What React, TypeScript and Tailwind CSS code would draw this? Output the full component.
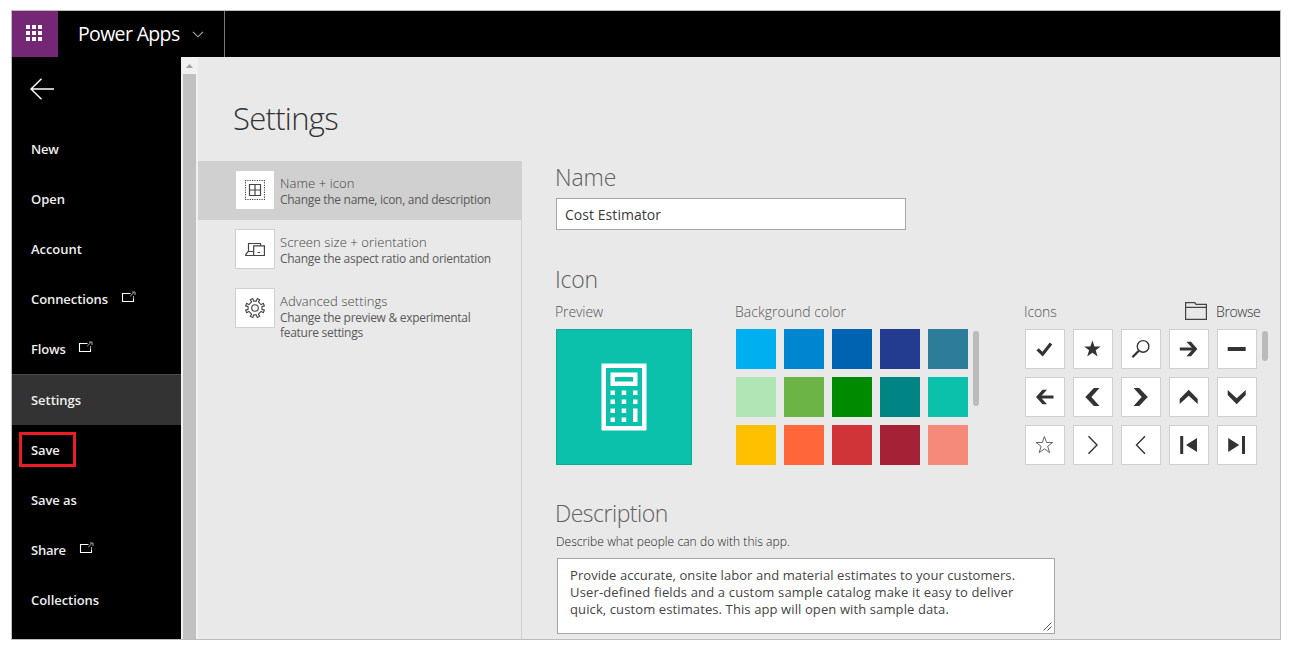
import React from "react";

const ExternalIcon = ({ className }: { className: string }) => (
  <svg width="15" height="12" viewBox="0 0 15 12" fill="none" stroke="#fff" className={className}>
    <path d="M9.5 2.5h-8v8h11V7.5" strokeWidth="1.1" />
    <path d="M12.5 8V5M9.2 5.2l3.6-3.6M11 1h3v3" stroke="#aaa" />
  </svg>
);

const menu = [
  { label: "New", cls: "tracking-[-0.2px]" },
  { label: "Open", cls: "tracking-[-0.05px]" },
  { label: "Account", cls: "tracking-[-0.05px]" },
  { label: "Connections", cls: "tracking-[-0.08px]", ext: "ml-[13px]" },
  { label: "Flows", cls: "tracking-[-0.15px]", ext: "ml-[12px]" },
  { label: "Settings", cls: "tracking-[-0.05px]", active: true },
  { label: "Save", cls: "tracking-[-0.1px]", boxed: true },
  { label: "Save as", cls: "tracking-[-0.1px]" },
  { label: "Share", cls: "tracking-[-0.25px]", ext: "ml-[13px]" },
  { label: "Collections", cls: "tracking-[-0.05px]" },
];

const sections = [
  {
    title: "Name + icon",
    text: ["Change the name, icon, and description"],
    active: true,
    icon: (
      <g fill="none" stroke="#444">
        <path d="M0 .5H20M0 19.5H20M.5 0V20M19.5 0V20" strokeDasharray="1.2 1.15" strokeWidth="1.1" />
        <path d="M4.5 4.5h11v11h-11zM10 4.5v11M4.5 10h11" strokeWidth="1.2" />
      </g>
    ),
  },
  {
    title: "Screen size + orientation",
    text: ["Change the aspect ratio and orientation"],
    icon: (
      <g fill="none" stroke="#444" strokeWidth="1.2">
        <path d="M3.5 12V4.5h12v2.3M3.5 12.2.7 15.5v1h8M3.5 12.5h5" />
        <path d="M8.7 6.9h10.7v9.6H8.7zM12.5 13.5h2.5" />
      </g>
    ),
  },
  {
    title: "Advanced settings",
    text: ["Change the preview & experimental", "feature settings"],
    icon: (
      <g fill="none" stroke="#444" strokeWidth="1.1" strokeLinejoin="round">
        <circle cx="10" cy="10" r="3.3" />
        <path d="M8.6 3.1 7.9.6 5.3 1.7 6.6 3.9 3.9 6.6 1.7 5.3.6 7.9 3.1 8.6V11.4L.6 12.1 1.7 14.7 3.9 13.4 6.6 16.1 5.3 18.3 7.9 19.4 8.6 16.9H11.4L12.1 19.4 14.7 18.3 13.4 16.1 16.1 13.4 18.3 14.7 19.4 12.1 16.9 11.4V8.6L19.4 7.9 18.3 5.3 16.1 6.6 13.4 3.9 14.7 1.7 12.1.6 11.4 3.1z" />
      </g>
    ),
  },
];

const colors = [
  "bg-[#00aff0]", "bg-[#0085d0]", "bg-[#0063b1]", "bg-[#243c8f]", "bg-[#2d7d9a]",
  "bg-[#b0e5b5]", "bg-[#6bb445]", "bg-[#008a00]", "bg-[#008484]", "bg-[#0cc1ab]",
  "bg-[#ffc000]", "bg-[#ff673a]", "bg-[#d13438]", "bg-[#a52136]", "bg-[#f58a7a]",
];

const star = "M8.4.5 10.5 6.5H16.7L11.7 10.3 13.6 16.6 8.4 12.8 3.2 16.6 5.1 10.3.1 6.5H6.3z";

const glyphs = [
  <path d="M1.6 9.4 6.6 14.2 15 3.4" fill="none" stroke="#333" strokeWidth="3.2" />,
  <path d={star} fill="#333" />,
  <g fill="none" stroke="#333">
    <circle cx="11.1" cy="6.4" r="5.8" strokeWidth="1.4" />
    <path d="M6.8 10.8.4 17.2" strokeWidth="2.3" />
  </g>,
  <g>
    <path d="M-.2 9h15" stroke="#333" strokeWidth="3" />
    <path d="M6.5 1.7H11L17.4 9 11 16.3H6.5L13 9z" fill="#333" />
  </g>,
  <path d="M-.3 9h18" stroke="#333" strokeWidth="4" />,
  <g>
    <path d="M2.5 9h15" stroke="#333" strokeWidth="3" />
    <path d="M11 1.7H6.5L0 9l6.5 7.3H11L4.4 9z" fill="#333" />
  </g>,
  <path d="M9.9 0h5.6L7.4 9l8.1 9H9.9L1.3 9z" fill="#333" />,
  <path d="M7.2 0H1.6l8.1 9-8.1 9h5.6l8.6-9z" fill="#333" />,
  <path d="M-.3 11v5L8.7 7.8l9 8.2v-5l-9-9.2z" fill="#333" />,
  <path d="M-.3 7V2l9 8.2 9-8.2v5l-9 9.2z" fill="#333" />,
  <path d={star} fill="none" stroke="#555" strokeWidth=".9" />,
  <path d="m4.5.3 8.5 8.7-8.5 8.7" fill="none" stroke="#333" strokeWidth="1.4" />,
  <path d="M13 .3 4.5 9l8.5 8.7" fill="none" stroke="#333" strokeWidth="1.4" />,
  <path d="M.2 0h3v18h-3zM17 2v14L6 9z" fill="#333" />,
  <path d="M14 0h3v18h-3zM.2 2v14l11-7z" fill="#333" />,
];

const light = "font-['Open_Sans','Noto_Sans',sans-serif] font-light";

export default function App() {
  return (
    <div className="h-[652px] w-[1293px] bg-white pt-[10px] pl-[11px] font-['Open_Sans','Noto_Sans',sans-serif] whitespace-nowrap">
      <div className="flex h-[630px] w-[1270px] flex-col overflow-hidden border border-[#bdbdbd] bg-[#e9e9e9]">
        <header className="flex h-[46px] shrink-0 bg-black text-white">
          <div className="flex w-[46px] items-center justify-center bg-[#742774]">
            <svg width="16" height="16" viewBox="0 0 16 16" fill="#fff" className="mr-[2px] mb-[2px]">
              {[0, 6, 12].map((y) => [0, 6, 12].map((x) => <rect key={`${x}-${y}`} x={x} y={y} width="4" height="4" />))}
            </svg>
          </div>
          <div className="flex w-[167px] items-center border-r border-[#777] pl-5">
            <span className="w-[102px] text-[19.5px] leading-[46px] tracking-[-0.65px]">Power Apps</span>
            <svg width="12" height="7" viewBox="0 0 12 7" fill="none" stroke="#aaa" strokeWidth="1.1" className="ml-[12px] mt-px">
              <path d="m1 .8 5 5 5-5" />
            </svg>
          </div>
        </header>

        <div className="flex min-h-0 flex-1">
          <nav className="w-[169px] shrink-0 bg-black text-[13px] font-semibold text-[#eee]">
            <div className="h-[67px] pt-[21px] pl-[18px]">
              <svg width="25" height="22" viewBox="0 0 25 22" fill="none" stroke="#fff" strokeWidth="1.5">
                <path d="M11.5.7 1 11l10.5 10.3M1 11h23" />
              </svg>
            </div>
            {menu.map((m) => (
              <div
                key={m.label}
                className={
                  m.active
                    ? "flex h-[51px] items-center border-t border-[#4a4a4a] bg-[#333] pl-[19px]"
                    : m.boxed
                      ? "flex h-[50px] items-center pb-px pl-[7px]"
                      : "flex h-[50px] items-center pl-[19px]"
                }
              >
                {m.boxed ? (
                  <div className="flex h-[35px] w-[57px] items-center border-[3px] border-[#ed1c24] pt-[3px] pl-[9px]">
                    <span className={m.cls}>{m.label}</span>
                  </div>
                ) : (
                  <span className={`${m.cls} pt-[2px]`}>{m.label}</span>
                )}
                {m.ext && <ExternalIcon className={`${m.ext} mb-[4px]`} />}
              </div>
            ))}
          </nav>

          <div className="flex w-[17px] shrink-0 flex-col items-center bg-[#f1f1f1]">
            <svg width="17" height="17" viewBox="0 0 17 17" fill="#a3a3a3">
              <path d="M5 11h7L8.5 7z" />
            </svg>
            <div className="w-[13px] flex-1 bg-[#c1c1c1]" />
          </div>

          <div className="flex w-[324px] shrink-0 flex-col">
            <h1 className={`${light} h-[104px] pl-[35px] text-[31px] leading-[122px] tracking-[-0.7px] text-[#333]`}>Settings</h1>
            <div className="flex-1 border-r border-[#d0d0d0]">
              {sections.map((s) => (
                <div
                  key={s.title}
                  className={s.active ? "-mr-px flex h-[59px] bg-[#d0d0d0] pt-[9px] pl-[37px]" : "flex h-[59px] pt-[9px] pl-[37px]"}
                >
                  <div className="flex size-10 shrink-0 items-center justify-center border border-[#d0d0d0] bg-white">
                    <svg width="20" height="20" viewBox="0 0 20 20">{s.icon}</svg>
                  </div>
                  <div className="pt-[5px] pl-[5px]">
                    <div className={`${light} text-[13px] leading-[17px] tracking-[0.1px] text-[#444]`}>{s.title}</div>
                    {s.text.map((t) => (
                      <div key={t} className="text-[12px] leading-[15px] tracking-[-0.29px] text-[#5a5a5a]">{t}</div>
                    ))}
                  </div>
                </div>
              ))}
            </div>
          </div>

          <main className={`${light} pt-[102px] pl-[34px] text-[#555]`}>
            <h2 className="-ml-px h-[39px] text-[23px] leading-[37px] tracking-[-0.1px] text-[#606060]">Name</h2>
            <div className="h-8 w-[350px] border border-[#a6a6a6] bg-white pl-[8px] text-[14px] leading-[31px] font-normal tracking-[0.05px] text-[#3a3a3a]">
              Cost Estimator
            </div>
            <h2 className="mt-[31px] -ml-px h-[36px] text-[23px] leading-[36px] tracking-[-0.2px] text-[#606060]">Icon</h2>
            <div className="-ml-px flex h-[32px] pl-px text-[14px] leading-[30px]">
              <div className="-ml-px w-[180px] tracking-[-0.1px]">Preview</div>
              <div className="w-[289px] tracking-[0.02px]">Background color</div>
              <div className="w-[161px] tracking-[-0.1px]">Icons</div>
              <svg width="22" height="18" viewBox="0 0 22 18" fill="none" stroke="#444" strokeWidth="1.2" className="mt-[5px] mr-[9px]">
                <path d="M.6.6h9.2l1.2 1.8h10.4v15H.6zM.6 5.4h20.8" />
              </svg>
              <div className="tracking-[-0.4px] text-[#333]">Browse</div>
            </div>
            <div className="flex h-[136px]">
              <div className="flex w-[136px] items-center justify-center border border-[#0aac98] bg-[#0cc1ab]">
                <svg width="46" height="68" viewBox="0 0 46 68" fill="#fff">
                  <path fillRule="evenodd" d="M.5.5h45v67H.5zM5 5v58h36V5zM9.5 9.5h27v13.5h-27zM14 14v4.5h18V14z" />
                  {[27.5, 36.5, 45.5, 54.5].map((y) => [9.5, 20.7].map((x) => <rect key={`${x}-${y}`} x={x} y={y} width="4.5" height="4.5" />))}
                  <path d="M32 27.5h4.5V32H32zM32 36.5h4.5V41H32zM32 45.5h4.5V59H32z" />
                </svg>
              </div>
              <div className="ml-[44px] grid w-[232px] grid-cols-5 gap-2">
                {colors.map((c) => <div key={c} className={`${c} size-10`} />)}
              </div>
              <div className="mt-[2px] ml-[5px] h-[75px] w-[6px] rounded-full bg-[#bbb]" />
              <div className="ml-[46px] grid w-[232px] grid-cols-5 gap-2">
                {glyphs.map((g, i) => (
                  <div key={i} className="flex size-10 items-center justify-center border border-[#d0d0d0] bg-white">
                    <svg width="18" height="18" viewBox="0 0 18 18" className="overflow-visible">{g}</svg>
                  </div>
                ))}
              </div>
              <div className="mt-[2px] ml-[5px] h-[30px] w-[6px] rounded-full bg-[#bbb]" />
            </div>
            <h2 className="mt-[30px] -ml-px h-[37px] text-[23px] leading-[37px] tracking-[-0.5px] text-[#606060]">Description</h2>
            <div className="h-[26px] text-[12px] leading-[19px] tracking-[0.06px] text-[#222]">Describe what people can do with this app.</div>
            <div className="relative ml-px h-[76px] w-[498px] border border-[#a6a6a6] bg-white pt-[8px] pl-[12px] text-[13px] leading-[17px] font-normal text-[#444]">
              <div className="tracking-[0.07px]">Provide accurate, onsite labor and material estimates to your customers.</div>
              <div className="tracking-[0.15px]">User-defined fields and a custom sample catalog make it easy to deliver</div>
              <div className="tracking-[0.11px]">quick, custom estimates. This app will open with sample data.</div>
              <svg width="9" height="9" viewBox="0 0 9 9" fill="none" stroke="#555" className="absolute right-[2px] bottom-[2px]">
                <path d="M.5 8.5l8-8M4.5 8.5l4-4" />
              </svg>
            </div>
          </main>
        </div>
      </div>
    </div>
  );
}
